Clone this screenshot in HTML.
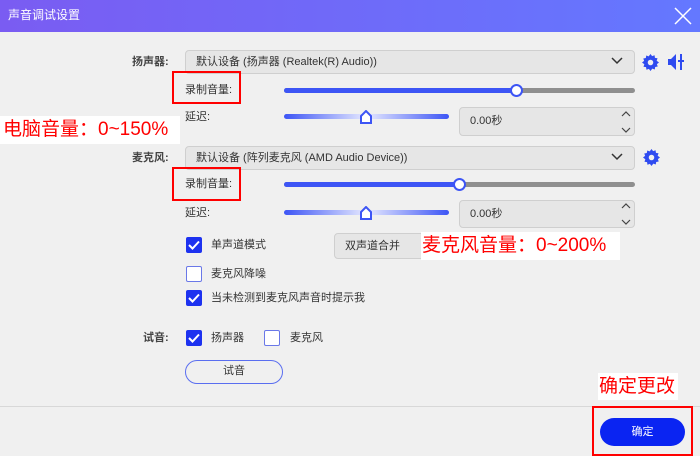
<!DOCTYPE html>
<html><head><meta charset="utf-8"><style>
*{margin:0;padding:0;box-sizing:border-box}
body{width:700px;height:456px;background:#f0f0f0;font-family:"Liberation Sans","Noto Sans CJK SC",sans-serif;font-size:11px;color:#333;position:relative;overflow:hidden}
.a{position:absolute}
.title{left:0;top:0;width:700px;height:32px;background:linear-gradient(90deg,#7a5cf2,#6478ff)}
.sel{background:#e6e6e6;border:1px solid #cfcfcf;border-radius:4px;padding-left:10px;line-height:22px;color:#333}
.lbl{line-height:14px}
.track{height:5px;border-radius:3px;background:#8f8f8f}
.fill{height:5px;border-radius:3px;background:#3d55f5}
.knob{width:13px;height:13px;border-radius:50%;background:#fff;border:2px solid #3d55f5}
.cb{width:16px;height:16px;border-radius:2px}
.on{background:#1d32f0}
.off{border:1.5px solid #6a78e8;background:#fff}
.red{color:#f00;background:#fff;font-size:19px;line-height:28px}
.box{border:2px solid #f00}
</style></head><body>
<div class="a title"></div>
<div class="a" style="left:8px;top:7px;color:#fff;font-size:12px;line-height:16px">声音调试设置</div>
<svg class="a" style="left:673px;top:6px" width="20" height="20"><path d="M2 2L18 18M18 2L2 18" stroke="#fff" stroke-width="1.5"/></svg>

<div class="a lbl" style="left:132px;top:55px;font-weight:bold;color:#444">扬声器:</div>
<div class="a sel" style="left:185px;top:50px;width:450px;height:24px">默认设备 (扬声器 (Realtek(R) Audio))</div>
<svg class="a" style="left:610px;top:56px" width="14" height="10"><path d="M2 2L7 7L12 2" stroke="#333" stroke-width="1.5" fill="none"/></svg>
<svg class="a" style="left:642px;top:54px" width="17" height="17" viewBox="0 0 16 16"><path fill="#2f4bf0" d="M8 0l1.5 2 2.3-.8.4 2.4 2.4.4-.8 2.3L16 8l-2 1.5.8 2.3-2.4.4-.4 2.4-2.3-.8L8 16l-1.5-2-2.3.8-.4-2.4-2.4-.4.8-2.3L0 8l2-1.5-.8-2.3 2.4-.4.4-2.4 2.3.8z"/><circle cx="8" cy="8" r="2.6" fill="#f0f0f0"/></svg>
<svg class="a" style="left:667px;top:52px" width="20" height="20"><path d="M1 7h3l5-5v16l-5-5H1z" fill="#2f4bf0"/><path d="M14 2v16M11 9h6" stroke="#2f4bf0" stroke-width="2"/></svg>

<div class="a box" style="left:172px;top:71px;width:69px;height:33px"></div>
<div class="a lbl" style="left:185px;top:83px">录制音量:</div>
<div class="a track" style="left:284px;top:88px;width:351px"></div>
<div class="a fill" style="left:284px;top:88px;width:233px"></div>
<div class="a knob" style="left:510px;top:84px"></div>

<div class="a lbl" style="left:185px;top:110px">延迟:</div>
<div class="a" style="left:284px;top:114px;width:165px;height:5px;border-radius:3px;background:linear-gradient(90deg,#3d55f5,#e6e9ff 50%,#3d55f5)"></div>
<svg class="a" style="left:360px;top:110px" width="12" height="14"><path d="M1 13V6L6 1L11 6V13Z" fill="#fff" stroke="#3d55f5" stroke-width="2"/></svg>
<div class="a sel" style="left:459px;top:107px;width:176px;height:29px;line-height:27px">0.00秒</div>
<svg class="a" style="left:620px;top:109px" width="12" height="26"><path d="M2 7L6 3L10 7M2 19L6 23L10 19" stroke="#444" stroke-width="1.2" fill="none"/></svg>

<div class="a red" style="left:0;top:116px;width:180px;padding-left:3px">电脑音量：0~150%</div>

<div class="a lbl" style="left:132px;top:151px;font-weight:bold;color:#444">麦克风:</div>
<div class="a sel" style="left:185px;top:146px;width:450px;height:24px">默认设备 (阵列麦克风 (AMD Audio Device))</div>
<svg class="a" style="left:610px;top:152px" width="14" height="10"><path d="M2 2L7 7L12 2" stroke="#333" stroke-width="1.5" fill="none"/></svg>
<svg class="a" style="left:643px;top:149px" width="17" height="17" viewBox="0 0 16 16"><path fill="#2f4bf0" d="M8 0l1.5 2 2.3-.8.4 2.4 2.4.4-.8 2.3L16 8l-2 1.5.8 2.3-2.4.4-.4 2.4-2.3-.8L8 16l-1.5-2-2.3.8-.4-2.4-2.4-.4.8-2.3L0 8l2-1.5-.8-2.3 2.4-.4.4-2.4 2.3.8z"/><circle cx="8" cy="8" r="2.6" fill="#f0f0f0"/></svg>

<div class="a box" style="left:172px;top:167px;width:69px;height:34px"></div>
<div class="a lbl" style="left:185px;top:177px">录制音量:</div>
<div class="a track" style="left:284px;top:182px;width:351px"></div>
<div class="a fill" style="left:284px;top:182px;width:176px"></div>
<div class="a knob" style="left:453px;top:178px"></div>

<div class="a lbl" style="left:185px;top:206px">延迟:</div>
<div class="a" style="left:284px;top:210px;width:165px;height:5px;border-radius:3px;background:linear-gradient(90deg,#3d55f5,#e6e9ff 50%,#3d55f5)"></div>
<svg class="a" style="left:360px;top:206px" width="12" height="14"><path d="M1 13V6L6 1L11 6V13Z" fill="#fff" stroke="#3d55f5" stroke-width="2"/></svg>
<div class="a sel" style="left:459px;top:200px;width:176px;height:28px;line-height:26px">0.00秒</div>
<svg class="a" style="left:620px;top:201px" width="12" height="26"><path d="M2 7L6 3L10 7M2 19L6 23L10 19" stroke="#444" stroke-width="1.2" fill="none"/></svg>

<svg class="a cb on" style="left:186px;top:237px" width="16" height="16"><path d="M3 8L6.5 11.5L13 4.5" stroke="#fff" stroke-width="2" fill="none"/></svg>
<div class="a lbl" style="left:211px;top:238px">单声道模式</div>
<div class="a sel" style="left:334px;top:233px;width:100px;height:26px;line-height:24px">双声道合并</div>
<div class="a red" style="left:421px;top:232px;width:199px;padding-left:1px">麦克风音量：0~200%</div>

<div class="a cb off" style="left:186px;top:266px"></div>
<div class="a lbl" style="left:211px;top:267px">麦克风降噪</div>
<svg class="a cb on" style="left:186px;top:290px" width="16" height="16"><path d="M3 8L6.5 11.5L13 4.5" stroke="#fff" stroke-width="2" fill="none"/></svg>
<div class="a lbl" style="left:211px;top:291px">当未检测到麦克风声音时提示我</div>

<div class="a lbl" style="left:143px;top:331px;font-weight:bold;color:#444">试音:</div>
<svg class="a cb on" style="left:186px;top:330px" width="16" height="16"><path d="M3 8L6.5 11.5L13 4.5" stroke="#fff" stroke-width="2" fill="none"/></svg>
<div class="a lbl" style="left:211px;top:331px">扬声器</div>
<div class="a cb off" style="left:264px;top:330px"></div>
<div class="a lbl" style="left:290px;top:331px">麦克风</div>
<div class="a" style="left:185px;top:360px;width:98px;height:24px;border:1.5px solid #5a6ef0;border-radius:12px;text-align:center;line-height:21px">试音</div>

<div class="a" style="left:0;top:406px;width:700px;height:1px;background:#d8d8d8"></div>
<div class="a red" style="left:598px;top:373px;width:80px;line-height:27px;padding-left:1px">确定更改</div>
<div class="a box" style="left:592px;top:406px;width:101px;height:50px"></div>
<div class="a" style="left:600px;top:418px;width:85px;height:28px;background:#0a24f2;border-radius:14px;color:#fff;text-align:center;line-height:28px">确定</div>
</body></html>
